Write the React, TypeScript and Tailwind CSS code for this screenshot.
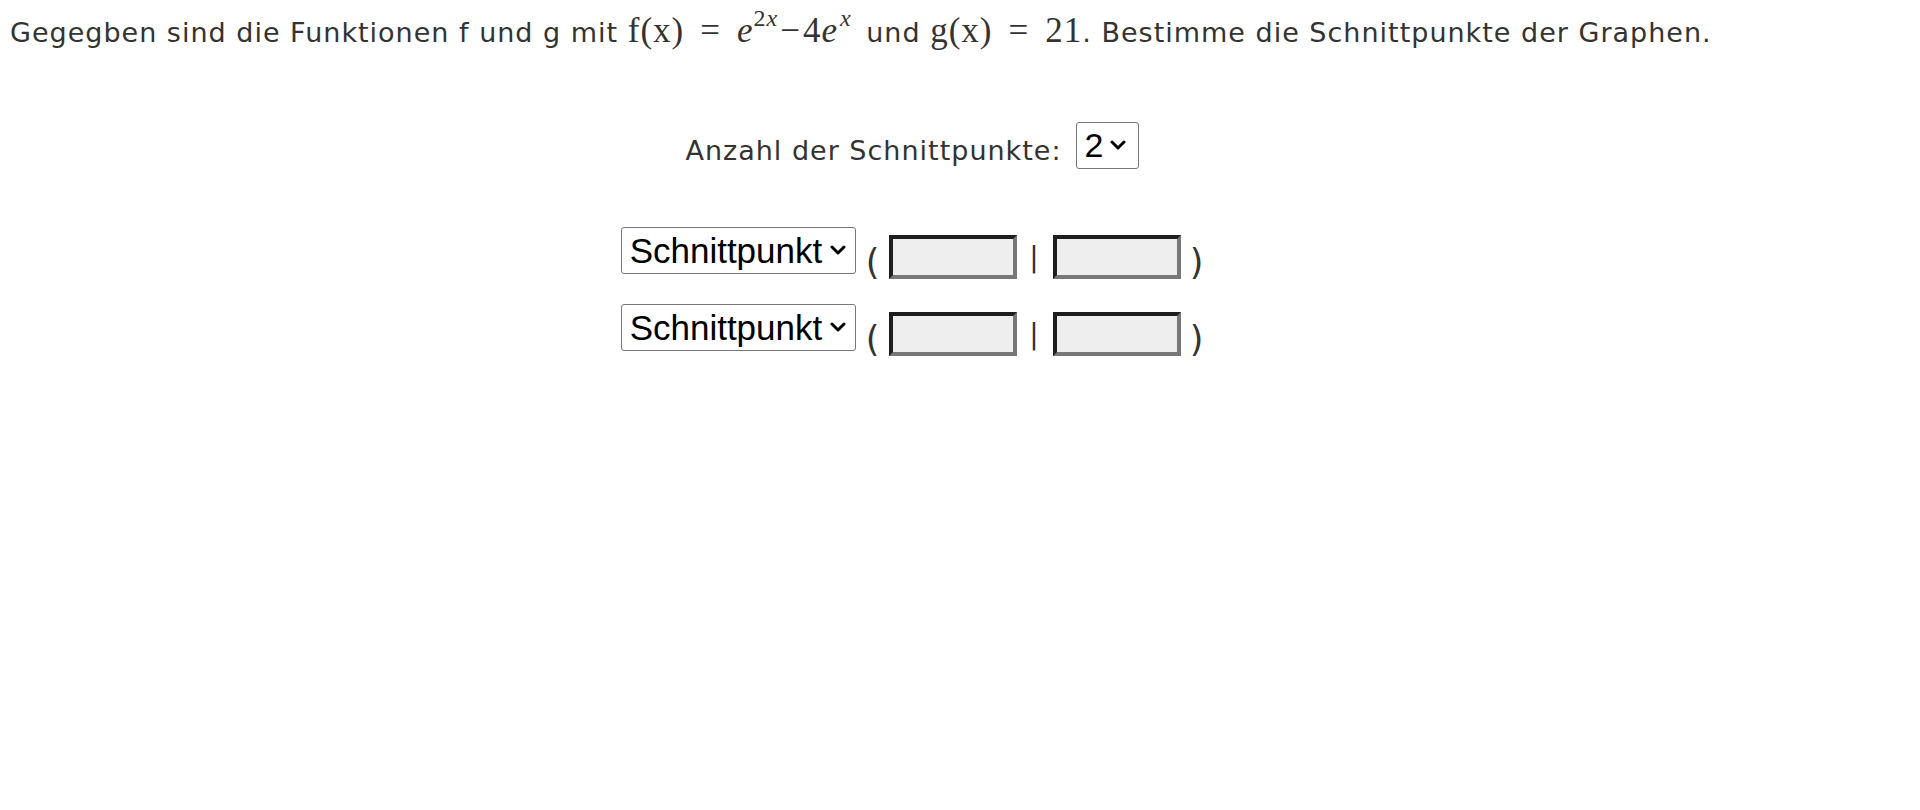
function Chevron() {
  return (
    <svg width="16" height="10" viewBox="0 0 16 10" className="shrink-0">
      <polyline points="2,2 8,8 14,2" fill="none" stroke="black" strokeWidth="3" strokeLinecap="round" strokeLinejoin="round" />
    </svg>
  );
}

function Dropdown({ label, wide }: { label: string; wide?: boolean }) {
  return (
    <div
      className={`flex items-center border border-[#767676] rounded-[3px] bg-white text-black h-[47px] font-['Liberation_Sans',Arial,sans-serif] ${
        wide ? 'w-[235px] pl-[8px] gap-[8px] text-[35px]' : 'w-[63px] pl-[8px] gap-[6px] text-[34px]'
      }`}
    >
      <span className="leading-none">{label}</span>
      <Chevron />
    </div>
  );
}

function CoordBox() {
  return (
    <div className="w-[128px] h-[44px] bg-[#eeeeee] border-4 border-t-[#1e1e1e] border-l-[#1e1e1e] border-r-[#777777] border-b-[#777777]" />
  );
}

function PointRow() {
  return (
    <div className="flex items-start h-[47px]">
      <Dropdown label="Schnittpunkt" wide />
      <span className="ml-[10px] mt-[18px] text-[35px] leading-none">(</span>
      <div className="ml-[10px] mt-[8px]">
        <CoordBox />
      </div>
      <span className="ml-[12px] mt-[17px] text-[28px] leading-none">|</span>
      <div className="ml-[14px] mt-[8px]">
        <CoordBox />
      </div>
      <span className="ml-[9px] mt-[18px] text-[35px] leading-none">)</span>
    </div>
  );
}

export default function App() {
  const m = "font-['Liberation_Serif','Times_New_Roman',serif] text-[35px] tracking-[1px]";
  return (
    <div className="min-h-screen bg-white text-[#333333] font-['DejaVu_Sans',Verdana,sans-serif]">
      <p className="pl-[10px] pt-[10px] text-[27px] tracking-[1px] leading-[42px] whitespace-nowrap">
        Gegegben sind die Funktionen f und g mit{' '}
        <span className={m}>
          f(x)<span className="mx-[16px]">=</span>
          <i>e</i>
          <sup className="text-[24px] top-[-0.65em]">
            2<i>x</i>
          </sup>
          <span className="ml-[2px] mr-[2px]">−</span>4<i>e</i>
          <sup className="text-[24px] top-[-0.65em] ml-[2px] mr-[5px]">
            <i>x</i>
          </sup>
        </span>{' '}
        und{' '}
        <span className={m}>
          g(x)<span className="mx-[16px]">=</span>21
        </span>
        . Bestimme die Schnittpunkte der Graphen.
      </p>

      <div className="w-[1824px] flex flex-col items-center">
        <div className="mt-[65px] flex items-center gap-[14px] text-[27px] tracking-[1px]">
          <span className="mt-[12px]">Anzahl der Schnittpunkte:</span>
          <Dropdown label="2" />
        </div>
        <div className="mt-[55px] flex flex-col gap-[30px]">
          <PointRow />
          <PointRow />
        </div>
      </div>
    </div>
  );
}
